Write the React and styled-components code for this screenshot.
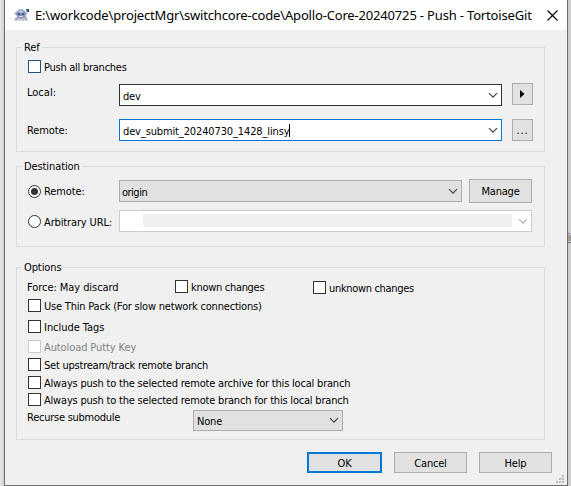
import React from "react";
import styled, { createGlobalStyle, css } from "styled-components";

const GlobalStyle = createGlobalStyle`
  * { box-sizing: border-box; }
  html, body { margin: 0; padding: 0; overflow: hidden; }
`;

const Desktop = styled.div`
  display: flex;
  position: relative;
  width: 571px;
  height: 486px;
  padding: 0 3px 0 4px;
  background: linear-gradient(to right, #e9e9e9 0, #cfcfcf 4px, #cfcfcf 568px, #c8c8c8 568px, #d3d3d3 571px);
  font-family: "DejaVu Sans Condensed", "DejaVu Sans", sans-serif;
  font-stretch: condensed;
  font-size: 11px;
  line-height: 14px;
  color: #000;
`;

const Window = styled.main`
  display: flex;
  flex-direction: column;
  width: 564px;
  height: 486px;
  background: #f0f0f0;
  border: 1px solid #6d6d6d;
  border-top: 0;
`;

const TitleBar = styled.header`
  display: flex;
  align-items: center;
  flex: none;
  height: 30px;
  padding-left: 8px;
  background: #fff;
`;

const Title = styled.h1`
  flex: none;
  width: 512px;
  margin: 0 0 0 5px;
  font-family: "Noto Sans", sans-serif;
  font-size: 13px;
  font-weight: 400;
  letter-spacing: -0.17px;
  line-height: 28px;
  white-space: nowrap;
`;

const Text = styled.span`
  flex: none;
  white-space: nowrap;
  letter-spacing: ${(p) => (p.$ls === undefined ? -0.2 : p.$ls)}px;
  padding-top: ${(p) => p.$drop || 2}px;
  padding-bottom: ${(p) => p.$lift || 0}px;
  ${(p) => p.$muted && css`color: #838383;`}
`;

const Group = styled.section`
  flex: none;
  width: 529px;
  height: ${(p) => p.$h}px;
  margin: ${(p) => p.$mt}px 0 0 11px;
  padding-left: 10px;
  border: 1px solid #dcdcdc;
`;

const Legend = styled.h2`
  width: max-content;
  height: 14px;
  margin: -8px 0 0 -5px;
  padding: 0 2px;
  background: #f0f0f0;
  font-size: 11px;
  font-weight: 400;
  letter-spacing: -0.1px;
  line-height: 16px;
  white-space: nowrap;
`;

const Row = styled.div`
  display: flex;
  align-items: center;
  height: ${(p) => p.$h}px;
  margin-top: ${(p) => p.$mt || 0}px;
`;

const Option = styled.label`
  display: flex;
  align-items: center;
  gap: 3px;
  height: 13px;
  margin: ${(p) => p.$mt || 0}px 0 0 ${(p) => (p.$ml === undefined ? 1 : p.$ml)}px;
`;

const Box = styled.span`
  flex: none;
  width: 13px;
  height: 13px;
  background: #fff;
  border: 1px solid ${(p) => p.$color || "#333"};
`;

const Radio = styled.span`
  display: grid;
  place-items: center;
  flex: none;
  width: 13px;
  height: 13px;
  background: #fff;
  border: 1px solid #333;
  border-radius: 50%;
  &::after {
    content: "";
    width: 7px;
    height: 7px;
    border-radius: 50%;
    background: ${(p) => (p.$on ? "#333" : "transparent")};
  }
`;

const LabelCell = styled.div`
  display: flex;
  align-items: center;
  flex: none;
  width: ${(p) => p.$w || 92}px;
`;

const Combo = styled.div`
  display: flex;
  align-items: center;
  justify-content: space-between;
  flex: none;
  width: ${(p) => p.$w}px;
  height: ${(p) => p.$h || 22}px;
  padding: 0 3px 0 ${(p) => p.$pl || 3}px;
  background: ${(p) => p.$bg || "#fff"};
  border: 1px solid ${(p) => p.$border};
`;

const Value = styled.span`
  display: flex;
  align-items: center;
`;

const Caret = styled.i`
  width: 1px;
  height: 13px;
  background: #000;
`;

const Redacted = styled.div`
  width: 369px;
  height: 13px;
  margin-bottom: 1px;
  background: #f0f0f0;
`;

const Button = styled.button`
  display: grid;
  place-items: center;
  flex: none;
  width: ${(p) => p.$w}px;
  height: ${(p) => p.$h}px;
  margin: 0 0 ${(p) => p.$mb || 0}px ${(p) => p.$ml || 0}px;
  padding: 0;
  background: #e1e1e1;
  border: ${(p) => (p.$primary ? "2px solid #0078d7" : "1px solid #adadad")};
  color: #000;
  font: inherit;
`;

const Footer = styled.footer`
  display: flex;
  gap: 12px;
  margin: 12px 0 0 302px;
  height: 21px;
`;

const Grip = styled.svg`
  display: block;
  margin: 2px 0 0 551px;
`;

const Peek = styled.svg`
  position: absolute;
  left: 568px;
  top: 232px;
`;

const Chevron = ({ color = "#444" }) => (
  <svg width="10" height="7" viewBox="0 0 10 7" fill="none" stroke={color} strokeWidth="1.2">
    <path d="M1 1.2 5 5.2 9 1.2" />
  </svg>
);

const Turtle = () => (
  <svg width="17" height="14" viewBox="0 0 17 14">
    <path d="M1 4.5 4 3.5 5 7 2 7Z" fill="#b9bdc4" />
    <path d="M3 9 1 12.5H5L6 10Z M10 9 12 12.5H15L13 8Z" fill="#a7abb1" />
    <path d="M5 10H12L11 13H6Z" fill="#c8cbd0" />
    <path d="M12 7 14 4" stroke="#b5b9c0" strokeWidth="1.8" />
    <ellipse cx="8" cy="6" rx="4.8" ry="4.7" fill="#8392b9" />
    <ellipse cx="8" cy="3.6" rx="2.8" ry="1.5" fill="#b3c0df" />
    <path d="M5 6H7M9 6H11" stroke="#354878" strokeWidth="1.6" />
    <path d="M6 8.5H10" stroke="#dce2ee" />
    <path d="M13 1H16V4H14Z" fill="#24566b" />
  </svg>
);

const Check = ({ children, ls, mt, ml, color, muted }) => (
  <Option $mt={mt} $ml={ml}>
    <Box $color={color} />
    <Text $ls={ls} $muted={muted}>{children}</Text>
  </Option>
);

export default function App() {
  return (
    <>
      <GlobalStyle />
      <Desktop>
        <Window>
          <TitleBar>
            <Turtle />
            <Title>E:\workcode\projectMgr\switchcore-code\Apollo-Core-20240725 - Push - TortoiseGit</Title>
            <svg width="11" height="11" viewBox="0 0 11 11" stroke="#000" strokeWidth="1.1">
              <path d="M.5.5 10.5 10.5M10.5.5.5 10.5" />
            </svg>
          </TitleBar>

          <Group $h={105} $mt={17}>
            <Legend>Ref</Legend>
            <Check mt={6} ls={-0.26} color="#26517f">Push all branches</Check>
            <Row $h={22} $mt={11}>
              <LabelCell><Text $lift={7} $ls={0}>Local:</Text></LabelCell>
              <Combo $w={383} $border="#333"><Text $drop={4}>dev</Text><Chevron /></Combo>
              <Button $w={21} $h={22} $ml={10} $mb={2} aria-label="Browse local">
                <svg width="5" height="8" viewBox="0 0 5 8"><path d="M0 0 4.5 4 0 8Z" /></svg>
              </Button>
            </Row>
            <Row $h={22} $mt={13}>
              <LabelCell><Text $lift={1} $ls={-0.1}>Remote:</Text></LabelCell>
              <Combo $w={383} $border="#0078d7">
                <Value><Text $ls={-0.13} $drop={3}>dev_submit_20240730_1428_linsy</Text><Caret /></Value>
                <Chevron />
              </Combo>
              <Button $w={21} $h={22} $ml={10}><Text $ls={0.8}>...</Text></Button>
            </Row>
          </Group>

          <Group $h={81} $mt={14}>
            <Legend>Destination</Legend>
            <Row $h={24} $mt={6}>
              <LabelCell><Option><Radio $on /><Text $ls={-0.1}>Remote:</Text></Option></LabelCell>
              <Combo $w={343} $border="#adadad" $bg="#e1e1e1" $pl={2}><Text $ls={-0.5} $drop={3}>origin</Text><Chevron /></Combo>
              <Button $w={63} $h={24} $ml={7}><Text>Manage</Text></Button>
            </Row>
            <Row $h={22} $mt={7}>
              <LabelCell><Option><Radio /><Text $ls={-0.14} $drop={3}>Arbitrary URL:</Text></Option></LabelCell>
              <Combo $w={413} $border="#ccc" $pl={23}><Redacted /><Chevron color="#aaa" /></Combo>
            </Row>
          </Group>

          <Group $h={173} $mt={20}>
            <Legend>Options</Legend>
            <Row $h={13} $mt={6}>
              <LabelCell $w={148}><Text $ls={-0.06}>Force: May discard</Text></LabelCell>
              <LabelCell $w={138}><Check ml={0} ls={-0.3}>known changes</Check></LabelCell>
              <Check ml={0} mt={2} ls={-0.33}>unknown changes</Check>
            </Row>
            <Check mt={6}>Use Thin Pack (For slow network connections)</Check>
            <Check mt={8} ls={-0.04}>Include Tags</Check>
            <Check mt={7} ls={-0.1} color="#ccc" muted>Autoload Putty Key</Check>
            <Check mt={5} ls={-0.23}>Set upstream/track remote branch</Check>
            <Check mt={5}>Always push to the selected remote archive for this local branch</Check>
            <Check mt={4}>Always push to the selected remote branch for this local branch</Check>
            <Row $h={21} $mt={4}>
              <LabelCell $w={166}><Text $lift={7} $ls={-0.25}>Recurse submodule</Text></LabelCell>
              <Combo $w={150} $h={21} $border="#adadad" $bg="#e1e1e1"><Text>None</Text><Chevron /></Combo>
            </Row>
          </Group>

          <Footer>
            <Button $w={75} $h={21} $primary><Text>OK</Text></Button>
            <Button $w={73} $h={21}><Text>Cancel</Text></Button>
            <Button $w={73} $h={21}><Text>Help</Text></Button>
          </Footer>
          <Grip width="8" height="8" viewBox="0 0 8 8" fill="#b9b9b9">
            <path d="M6 0h2v2h-2zM3 3h2v2h-2zM6 3h2v2h-2zM0 6h2v2h-2zM3 6h2v2h-2zM6 6h2v2h-2z" />
          </Grip>
        </Window>
        <Peek width="3" height="12" viewBox="0 0 3 12">
          <path d="M0 1.5H2M0 10.5H3" stroke="#777" />
          <path d="M0 3H2V9H0Z" fill="#b99b78" />
          <path d="M2.5 3V9" stroke="#8295b4" />
        </Peek>
      </Desktop>
    </>
  );
}
